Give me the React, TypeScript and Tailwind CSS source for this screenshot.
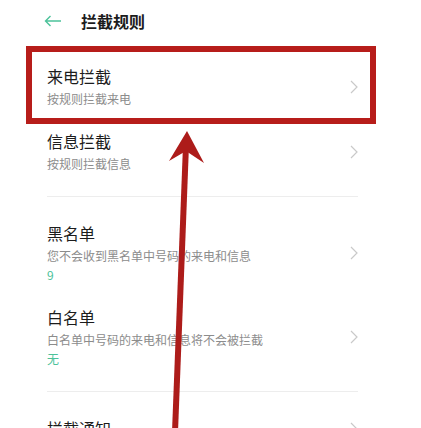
import React from "react";

const font = { fontFamily: '"Noto Sans CJK SC", "Noto Sans", sans-serif' };

function Chevron() {
  return (
    <svg width="8" height="14" viewBox="0 0 8 14" className="shrink-0">
      <polyline points="1,1 7,7 1,13" fill="none" stroke="#c9c9c9" strokeWidth="1.2" />
    </svg>
  );
}

function Row({ title, sub, extra }: { title: string; sub: string; extra?: string }) {
  return (
    <div className="flex items-center py-[11px] pl-[47px] pr-[63px]">
      <div className="flex-1 min-w-0">
        <div className="text-[16px] leading-[22px] text-[#1c1c1c]">{title}</div>
        <div className="mt-[2px] text-[12px] leading-[19px] text-[#8c8c8c] whitespace-nowrap">{sub}</div>
        {extra && <div className="text-[12px] leading-[19px] text-[#4cc29a]">{extra}</div>}
      </div>
      <Chevron />
    </div>
  );
}

function Divider() {
  return <div className="mt-[12px] mb-[14px] ml-[47px] mr-[63px] h-px bg-[#ededed]" />;
}

export default function App() {
  return (
    <div className="relative w-[421px] h-[428px] overflow-hidden bg-white" style={font}>
      <div className="h-[42px] flex items-center pl-[44px]">
        <svg width="18" height="12" viewBox="0 0 18 12">
          <path d="M17 6H1.5M6.5 1L1.5 6l5 5" fill="none" stroke="#4cc29a" strokeWidth="1.4" />
        </svg>
        <span className="ml-[19px] text-[16px] font-semibold text-[#1c1c1c]">拦截规则</span>
      </div>
      <div className="pt-[12px]">
        <Row title="来电拦截" sub="按规则拦截来电" />
        <Row title="信息拦截" sub="按规则拦截信息" />
        <Divider />
        <Row title="黑名单" sub="您不会收到黑名单中号码的来电和信息" extra="9" />
        <Row title="白名单" sub="白名单中号码的来电和信息将不会被拦截" extra="无" />
        <Divider />
        <Row title="拦截通知" sub="" />
      </div>

      {/* annotation box */}
      <div className="absolute left-[26px] top-[46px] w-[350px] h-[78px] border-[6px] border-[#b71d1a] pointer-events-none" />

      {/* annotation arrow */}
      <svg className="absolute left-0 top-0 pointer-events-none" width="421" height="428" viewBox="0 0 421 428">
        <line x1="186" y1="145" x2="175" y2="432" stroke="#ad1c1a" strokeWidth="6" />
        <polygon points="187,131 204,163 186,151 169,161" fill="#ad1c1a" />
      </svg>
    </div>
  );
}
